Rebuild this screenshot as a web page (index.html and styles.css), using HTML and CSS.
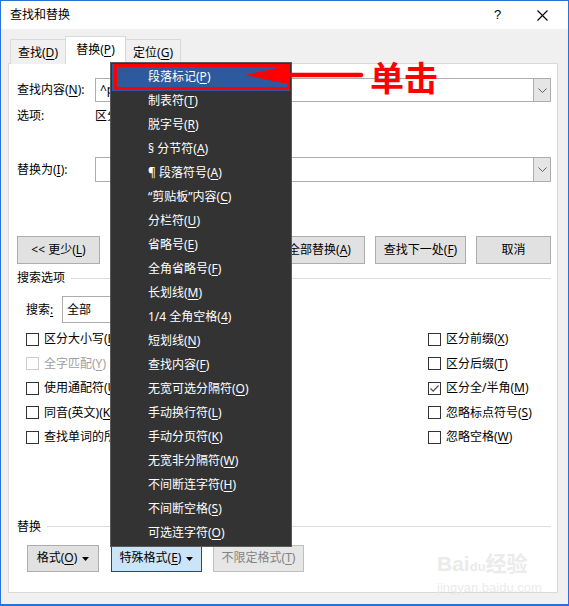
FILE: index.html
```html
<!DOCTYPE html>
<html lang="zh-CN">
<head>
<meta charset="utf-8">
<title>查找和替换</title>
<link rel="stylesheet" href="styles.css">
</head>
<body>
<div class="window">
  <div class="titlebar">
    <span class="title">查找和替换</span>
    <span class="help">?</span>
    <span class="close"><svg width="11" height="11" viewBox="0 0 11 11"><path d="M0.5 0.5 L10.5 10.5 M10.5 0.5 L0.5 10.5" stroke="#000" stroke-width="1.1" fill="none"/></svg></span>
  </div>
  <div class="body">
    <div class="tabs">
      <div class="tab">查找(<u>D</u>)</div>
      <div class="tab active">替换(<u>P</u>)</div>
      <div class="tab">定位(<u>G</u>)</div>
    </div>
    <div class="panel">
      <div class="field-row find">
        <span class="field-label">查找内容(<u>N</u>):</span>
        <div class="combo"><span class="combo-val">^p</span><span class="drop"><svg width="9" height="5" viewBox="0 0 9 5"><path d="M0.5 0.5 L4.5 4.5 L8.5 0.5" stroke="#606060" fill="none"/></svg></span></div>
      </div>
      <div class="opts-row">
        <span class="field-label">选项:</span>
        <span>区分全/半角</span>
      </div>
      <div class="field-row replace">
        <span class="field-label">替换为(<u>I</u>):</span>
        <div class="combo"><span class="combo-val"></span><span class="drop"><svg width="9" height="5" viewBox="0 0 9 5"><path d="M0.5 0.5 L4.5 4.5 L8.5 0.5" stroke="#606060" fill="none"/></svg></span></div>
      </div>
      <div class="btn-row">
        <button class="btn w83">&lt;&lt; 更少(<u>L</u>)</button>
        <div class="btn-group">
          <button class="btn w91">全部替换(<u>A</u>)</button>
          <button class="btn w91">查找下一处(<u>F</u>)</button>
          <button class="btn w74">取消</button>
        </div>
      </div>
      <div class="group-head"><span>搜索选项</span></div>
      <div class="search-row">
        <span class="search-label">搜索<u>:</u></span>
        <div class="select">全部</div>
      </div>
      <div class="checks">
        <div class="chk"><span class="box"></span><span>区分大小写(<u>H</u>)</span></div>
        <div class="chk"><span class="box"></span><span>区分前缀(<u>X</u>)</span></div>
        <div class="chk disabled"><span class="box"></span><span>全字匹配(<u>Y</u>)</span></div>
        <div class="chk"><span class="box"></span><span>区分后缀(<u>T</u>)</span></div>
        <div class="chk"><span class="box"></span><span>使用通配符(<u>U</u>)</span></div>
        <div class="chk"><span class="box checked"><svg width="11" height="11" viewBox="0 0 11 11"><path d="M1.5 5.5 L4.2 8.2 L9.5 2.5" stroke="#505050" stroke-width="1.2" fill="none"/></svg></span><span>区分全/半角(<u>M</u>)</span></div>
        <div class="chk"><span class="box"></span><span>同音(英文)(<u>K</u>)</span></div>
        <div class="chk"><span class="box"></span><span>忽略标点符号(<u>S</u>)</span></div>
        <div class="chk"><span class="box"></span><span>查找单词的所有形式(英文)(<u>W</u>)</span></div>
        <div class="chk"><span class="box"></span><span>忽略空格(<u>W</u>)</span></div>
      </div>
      <div class="group-head replace-head"><span>替换</span></div>
      <div class="bottom-row">
        <button class="btn w72">格式(<u>O</u>) <svg class="caret" width="7" height="4" viewBox="0 0 7 4"><path d="M0 0 H7 L3.5 4 Z" fill="#000"/></svg></button>
        <button class="btn w91 pressed">特殊格式(<u>E</u>) <svg class="caret" width="7" height="4" viewBox="0 0 7 4"><path d="M0 0 H7 L3.5 4 Z" fill="#000"/></svg></button>
        <button class="btn w91 disabled-btn">不限定格式(<u>T</u>)</button>
      </div>
    </div>
  </div>

  <div class="watermark">
    <div class="wm-main">Bai<span class="wm-du">du</span>经验</div>
    <div class="wm-sub">jingyan.baidu.com</div>
  </div>

  <ul class="menu">
    <li class="hl">段落标记(<u>P</u>)</li>
    <li>制表符(<u>T</u>)</li>
    <li>脱字号(<u>R</u>)</li>
    <li>§ 分节符(<u>A</u>)</li>
    <li>¶ 段落符号(<u>A</u>)</li>
    <li>“剪贴板”内容(<u>C</u>)</li>
    <li>分栏符(<u>U</u>)</li>
    <li>省略号(<u>E</u>)</li>
    <li>全角省略号(<u>F</u>)</li>
    <li>长划线(<u>M</u>)</li>
    <li>1/4 全角空格(<u>4</u>)</li>
    <li>短划线(<u>N</u>)</li>
    <li>查找内容(<u>F</u>)</li>
    <li>无宽可选分隔符(<u>O</u>)</li>
    <li>手动换行符(<u>L</u>)</li>
    <li>手动分页符(<u>K</u>)</li>
    <li>无宽非分隔符(<u>W</u>)</li>
    <li>不间断连字符(<u>H</u>)</li>
    <li>不间断空格(<u>S</u>)</li>
    <li>可选连字符(<u>O</u>)</li>
  </ul>
  <div class="red-box"></div>
  <svg class="arrow" width="130" height="30" viewBox="0 0 130 30"><path d="M0 15 L42 6 L42 24 Z" fill="#ff0000"/><line x1="40" y1="15" x2="116" y2="15" stroke="#ff0000" stroke-width="4.5" stroke-linecap="round"/></svg>
  <div class="callout">单击</div>
</div>
</body>
</html>
```

FILE: styles.css
```css
* { box-sizing: border-box; }
html, body { margin: 0; padding: 0; background: #ffffff; }
body { width: 569px; height: 606px; overflow: hidden; }

.window {
  position: relative;
  width: 569px;
  height: 606px;
  border: 1px solid #2a72d8;
  border-bottom-width: 2px;
  background: #f0f0f0;
  display: flex;
  flex-direction: column;
  font-family: "Noto Sans", "Noto Sans CJK SC", sans-serif;
  font-size: 12px;
  line-height: 16px;
  color: #000;
  overflow: hidden;
}

u { text-decoration: underline; text-underline-offset: 2px; text-decoration-thickness: 1px; }

.titlebar {
  height: 28px;
  background: #ffffff;
  display: flex;
  align-items: center;
  padding-left: 9px;
  flex: none;
}
.title { font-size: 12px; }
.help { margin-left: auto; width: 10px; font-size: 13px; font-family: "Liberation Sans", sans-serif; }
.close { margin-left: 33px; margin-right: 20px; display: flex; }

.body {
  flex: 1;
  display: flex;
  flex-direction: column;
  padding: 0 10px 11px 7px;
}

.tabs {
  height: 35px;
  display: flex;
  align-items: flex-end;
  padding-left: 2px;
  position: relative;
  z-index: 2;
  margin-bottom: -1px;
}
.tab {
  height: 25px;
  padding: 1px 0 0 0;
  border: 1px solid #d9d9d9;
  border-bottom: none;
  background: #f0f0f0;
  display: flex;
  align-items: center;
  justify-content: center;
  width: 56px;
  white-space: nowrap;
}
.tab + .tab { margin-left: -1px; }
.tab.active {
  height: 28px;
  background: #ffffff;
  width: 61px;
  padding: 0 0 2px 0;
}

.panel {
  flex: 1;
  background: #ffffff;
  border: 1px solid #d9d9d9;
  padding: 14px 6px 0 8px;
  display: flex;
  flex-direction: column;
}

.field-row { display: flex; align-items: center; height: 24px; }
.field-row.replace { margin-top: 31px; height: 25px; }
.field-label { width: 78px; flex: none; }
.combo {
  flex: 1;
  height: 100%;
  border: 1px solid #adadad;
  display: flex;
  align-items: center;
}
.combo-val { flex: 1; padding-left: 4px; }
.drop {
  width: 17px;
  height: 100%;
  border-left: 1px solid #adadad;
  background: #e5e5e5;
  display: flex;
  align-items: center;
  justify-content: center;
}

.opts-row { display: flex; align-items: center; height: 20px; margin-top: 4px; }

.btn-row { display: flex; margin-top: 54px; height: 28px; }
.btn-group { margin-left: auto; display: flex; gap: 10px; }
.btn {
  height: 100%;
  font: inherit;
  color: #000;
  background: #e1e1e1;
  border: 1px solid #adadad;
  padding: 0;
  display: flex;
  align-items: center;
  justify-content: center;
  white-space: nowrap;
}
.w83 { width: 83px; }
.w91 { width: 91px; }
.w74 { width: 75px; }
.w72 { width: 72px; }

.group-head {
  display: flex;
  align-items: center;
  height: 16px;
  margin-top: 6px;
}
.group-head::after {
  content: "";
  flex: 1;
  height: 1px;
  background: #dcdcdc;
  margin-left: 6px;
}
.replace-head { margin-top: 69px; }

.search-row { display: flex; align-items: center; margin-top: 10px; height: 27px; padding-left: 9px; }
.search-label { width: 36px; }
.select {
  width: 130px;
  height: 100%;
  border: 1px solid #adadad;
  display: flex;
  align-items: center;
  padding-left: 4px;
}

.checks {
  margin-top: 4px;
  padding-left: 9px;
  display: grid;
  grid-template-columns: 402px 1fr;
  grid-auto-rows: 24.5px;
}
.chk { display: flex; align-items: center; white-space: nowrap; }
.box {
  width: 13px;
  height: 13px;
  border: 1px solid #333333;
  background: #fff;
  margin-right: 5px;
  flex: none;
  display: flex;
  align-items: center;
  justify-content: center;
}
.chk.disabled { color: #a0a0a0; }
.chk.disabled .box { border-color: #cccccc; }

.bottom-row { display: flex; margin-top: 10px; height: 27px; padding-left: 10px; }
.bottom-row .btn + .btn { margin-left: 12px; }
.bottom-row .btn:last-child { margin-left: 11px; }
.caret { margin-left: 5px; margin-top: 1px; }
.btn.pressed { background: #cce4f7; border-color: #005499; }
.btn.disabled-btn { background: #e6e6e6; border-color: #bfbfbf; color: #838383; }

/* overlays */
.menu {
  position: absolute;
  left: 109px;
  top: 61px;
  width: 182px;
  height: 485px;
  margin: 0;
  padding: 2px 1px 0 1px;
  list-style: none;
  background: #333333;
  border: 1px solid #5a5a5a;
  color: #ffffff;
  z-index: 5;
}
.menu li {
  height: 24px;
  display: flex;
  align-items: center;
  padding-left: 36px;
  white-space: nowrap;
}
.menu li.hl { background: #2c5a9c; box-shadow: 0 -1px 0 #2c5a9c, 0 2px 0 #2c5a9c; }
.red-box {
  position: absolute;
  left: 113px;
  top: 63px;
  width: 176px;
  height: 26px;
  border: 3px solid #ff0000;
  z-index: 6;
}
.arrow {
  position: absolute;
  left: 244px;
  top: 59px;
  z-index: 7;
}
.callout {
  position: absolute;
  left: 369px;
  top: 54px;
  font-family: "Noto Sans CJK SC", sans-serif;
  font-size: 34px;
  line-height: 44px;
  font-weight: 700;
  color: #ff0000;
  z-index: 7;
}

.watermark {
  position: absolute;
  left: 436px;
  top: 550px;
  color: #ebebeb;
  font-family: "Liberation Sans", "Noto Sans CJK SC", sans-serif;
  z-index: 3;
}
.wm-main { font-size: 21px; line-height: 26px; font-weight: 700; }
.wm-du { font-size: 13px; }
.wm-sub { font-size: 13px; line-height: 16px; }
```
